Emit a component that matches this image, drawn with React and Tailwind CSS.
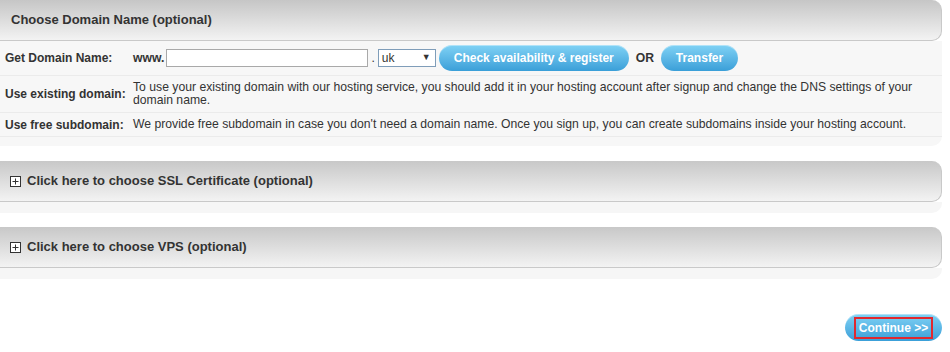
function PlusBox() {
  return (
    <svg width="11" height="11" viewBox="0 0 11 11" className="shrink-0">
      <rect x="0.5" y="0.5" width="10" height="10" fill="white" stroke="#333" />
      <path d="M2.5 5.5h6M5.5 2.5v6" stroke="#333" strokeWidth="1" />
    </svg>
  );
}

function BlueButton({ children, className = '' }) {
  return (
    <span
      className={`flex items-center justify-center rounded-full bg-gradient-to-b from-[#7fd2f5] to-[#3a9fd8] text-[12px] font-bold text-white shadow-[inset_0_1px_0_rgba(255,255,255,0.4)] ${className}`}
    >
      {children}
    </span>
  );
}

function Row({ label, children, className = '' }) {
  return (
    <div className={`flex border-b border-[#ebebeb] ${className}`}>
      <div className="w-[133px] shrink-0 pl-[5px] font-bold">{label}</div>
      <div className="flex-1 pr-[20px] text-[12.2px]">{children}</div>
    </div>
  );
}

function CollapsedSection({ title }) {
  return (
    <div>
      <div className="flex h-[41px] w-[942px] items-center gap-[6px] rounded-r-[10px] border-b border-r border-[#c9c9c9] bg-gradient-to-b from-[#c8c8c8] to-[#f3f3f3] pl-[10px] text-[13px] font-bold text-[#333]">
        <PlusBox />
        <span>{title}</span>
      </div>
      <div className="h-[11px] w-[942px] rounded-br-[10px] bg-[#f6f6f6]" />
    </div>
  );
}

export default function App() {
  return (
    <div className="h-[352px] w-[950px] bg-white font-['Liberation_Sans',Arial,sans-serif] text-[12px] text-[#333]">
      <div className="w-[942px]">
        <div className="flex h-[41px] items-center rounded-tr-[10px] rounded-br-[10px] border-b border-r border-[#c9c9c9] bg-gradient-to-b from-[#c6c6c6] to-[#f3f3f3] pl-[11px] text-[13px] font-bold text-[#333]">
          Choose Domain Name (optional)
        </div>
        <div className="rounded-br-[10px] bg-[#f7f7f7] pb-[9px]">
          <Row label="Get Domain Name:" className="h-[35px] items-center">
            <div className="flex items-center">
              <span className="font-bold">www.</span>
              <span className="ml-[2px] h-[18px] w-[202px] border border-[#a9a9a9] bg-white" />
              <span className="ml-[3px] mr-[3px]">.</span>
              <span className="flex h-[18px] w-[58px] items-center justify-between border border-[#7f9db9] bg-white pl-[3px] pr-[4px] text-[12px]">
                <span>uk</span>
                <span className="text-[9px]">▼</span>
              </span>
              <BlueButton className="ml-[3px] h-[26px] w-[190px]">Check availability &amp; register</BlueButton>
              <span className="ml-[7px] mr-[7px] font-bold">OR</span>
              <BlueButton className="h-[26px] w-[77px]">Transfer</BlueButton>
            </div>
          </Row>
          <Row label="Use existing domain:" className="h-[37px] items-center leading-[13px]">
            To use your existing domain with our hosting service, you should add it in your hosting account after signup and change the DNS settings of your domain name.
          </Row>
          <Row label="Use free subdomain:" className="h-[24px] items-center">
            We provide free subdomain in case you don't need a domain name. Once you sign up, you can create subdomains inside your hosting account.
          </Row>
        </div>
      </div>

      <div className="mt-[15px]">
        <CollapsedSection title="Click here to choose SSL Certificate (optional)" />
      </div>
      <div className="mt-[14px]">
        <CollapsedSection title="Click here to choose VPS (optional)" />
      </div>

      <div className="mt-[35px] flex w-[942px] justify-end">
        <BlueButton className="h-[27px] w-[97px]">
          <span className="border-2 border-[#e0282f] px-[3px] leading-[18px]">Continue &gt;&gt;</span>
        </BlueButton>
      </div>
    </div>
  );
}
